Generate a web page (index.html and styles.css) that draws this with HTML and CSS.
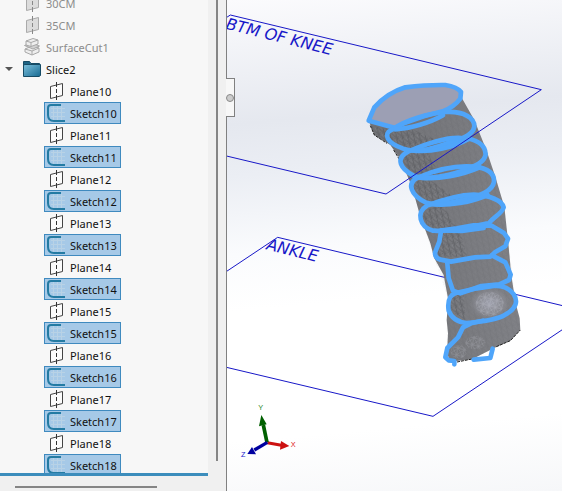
FILE: index.html
```html
<!DOCTYPE html>
<html lang="en">
<head>
    <meta charset="UTF-8">
    <meta name="viewport" content="width=device-width, initial-scale=1.0">
    <title>Slice2</title>
    <link rel="stylesheet" href="styles.css">
</head>
<body>
<svg class="defs" width="0" height="0" aria-hidden="true">
    <linearGradient id="folder-fill" x1="0" y1="0" x2="1" y2="1">
        <stop offset="0" stop-color="#7cc0dc"/>
        <stop offset="1" stop-color="#176a92"/>
    </linearGradient>
    <symbol id="plane" viewBox="0 0 18 20">
        <path d="M3.500 5.500L15.500 2.500V14.500L3.500 17.500Z" fill="#fcfcfc" stroke="#444"/>
        <path d="M9.500 1V6M9.500 8V12M9.500 14V19" stroke="#333" fill="none"/>
    </symbol>
    <symbol id="plane-off" viewBox="0 0 18 20">
        <path d="M3.500 5.500L15.500 2.500V14.500L3.500 17.500Z" fill="#dcdcdc" stroke="#aaa"/>
        <path d="M9.500 1V6M9.500 8V12M9.500 14V19" stroke="#888" fill="none"/>
    </symbol>
    <symbol id="cut" viewBox="0 0 18 20">
        <g fill="#eee" stroke="#a8a8a8" stroke-linejoin="round">
            <path d="M2 12L9 9L16 11V15L9 18L2 15Z"/>
            <path d="M2 12L9 14L16 11M9 14V18" fill="none"/>
            <path d="M1.500 8.500L9 6L16.500 9L10 12Z" fill="#d2d2d2"/>
            <path d="M3 4L10 1.500L15 3V7L8 9.500L3 8Z"/>
            <path d="M3 4L8 5.500L15 3M8 5.500V9.500" fill="none"/>
        </g>
    </symbol>
    <symbol id="folder" viewBox="0 0 18 20">
        <path d="M.500 2.500H6.500L8 4.500H16.500V7H.500Z" fill="#1d6485" stroke="#164b65"/>
        <path d="M.500 6L2 5.500H17.500V16.500L16 17.500H.500Z" fill="url(#folder-fill)" stroke="#164b65"/>
    </symbol>
    <symbol id="sketch" viewBox="0 0 18 20">
        <path d="M4 5.500H18M4 9.500H18M4 13.500H18M6.500 3V17M10.500 3V17M14.500 3V17" stroke="#b8d2e6" fill="none"/>
        <path d="M14 2H4Q1 2 1 5V12Q1 18 7 18H18" fill="none" stroke="#247ba3" stroke-width="2"/>
    </symbol>
</svg>

<div class="app">
    <aside class="panel">
        <div class="tree-area">
            <ul class="tree">
                <li><button class="item off"><svg class="icon"><use href="#plane-off"/></svg>30CM</button></li>
                <li><button class="item off"><svg class="icon"><use href="#plane-off"/></svg>35CM</button></li>
                <li><button class="item off"><svg class="icon"><use href="#cut"/></svg>SurfaceCut1</button></li>
                <li class="open">
                    <button class="caret" aria-label="Collapse Slice2"></button>
                    <button class="item"><svg class="icon"><use href="#folder"/></svg>Slice2</button>
                </li>
            </ul>
            <ul class="tree children">
                <li><button class="item"><svg class="icon"><use href="#plane"/></svg>Plane10</button></li>
                <li><button class="item selected"><svg class="icon"><use href="#sketch"/></svg>Sketch10</button></li>
                <li><button class="item"><svg class="icon"><use href="#plane"/></svg>Plane11</button></li>
                <li><button class="item selected"><svg class="icon"><use href="#sketch"/></svg>Sketch11</button></li>
                <li><button class="item"><svg class="icon"><use href="#plane"/></svg>Plane12</button></li>
                <li><button class="item selected"><svg class="icon"><use href="#sketch"/></svg>Sketch12</button></li>
                <li><button class="item"><svg class="icon"><use href="#plane"/></svg>Plane13</button></li>
                <li><button class="item selected"><svg class="icon"><use href="#sketch"/></svg>Sketch13</button></li>
                <li><button class="item"><svg class="icon"><use href="#plane"/></svg>Plane14</button></li>
                <li><button class="item selected"><svg class="icon"><use href="#sketch"/></svg>Sketch14</button></li>
                <li><button class="item"><svg class="icon"><use href="#plane"/></svg>Plane15</button></li>
                <li><button class="item selected"><svg class="icon"><use href="#sketch"/></svg>Sketch15</button></li>
                <li><button class="item"><svg class="icon"><use href="#plane"/></svg>Plane16</button></li>
                <li><button class="item selected"><svg class="icon"><use href="#sketch"/></svg>Sketch16</button></li>
                <li><button class="item"><svg class="icon"><use href="#plane"/></svg>Plane17</button></li>
                <li><button class="item selected"><svg class="icon"><use href="#sketch"/></svg>Sketch17</button></li>
                <li><button class="item"><svg class="icon"><use href="#plane"/></svg>Plane18</button></li>
                <li><button class="item selected"><svg class="icon"><use href="#sketch"/></svg>Sketch18</button></li>
            </ul>
        </div>
        <div class="scroll-y"><div class="thumb"></div></div>
        <div class="scroll-x"><div class="thumb"></div></div>
    </aside>

    <main class="viewport">
        <svg class="scene" viewBox="0 0 1005 1473" preserveAspectRatio="xMinYMin slice">
            <defs>
                <linearGradient id="leg-fill" x1="0" y1="0" x2="1" y2="0">
                    <stop offset="0" stop-color="#707175"/>
                    <stop offset="1" stop-color="#808186"/>
                </linearGradient>
                <radialGradient id="shine">
                    <stop offset="0" stop-color="#a0a2ae"/>
                    <stop offset="1" stop-color="#a0a2ae" stop-opacity="0"/>
                </radialGradient>
                <pattern id="mesh" width="17" height="23" patternUnits="userSpaceOnUse" patternTransform="rotate(-12)">
                    <path d="M0 0L17 23M9 0L2 23M17 4L0 12M4 0V23" stroke="#4b4c50" stroke-width="2" fill="none"/>
                    <path d="M0 18L13 5L17 14" stroke="#a0a1a5" stroke-width="1" fill="none"/>
                </pattern>
                <pattern id="mesh-light" width="19" height="21" patternUnits="userSpaceOnUse" patternTransform="rotate(15)">
                    <path d="M0 0L19 21M19 0L0 21M9 0V21M0 10H19" stroke="#c6c8d2" stroke-width="2" fill="none"/>
                </pattern>
            </defs>

            <!-- ankle plane -->
            <g class="plane-line">
                <path d="M-10 820L152 712L1015 919"/>
                <path d="M-10 1100L618 1249L1015 983"/>
            </g>

            <!-- leg -->
            <path fill="url(#leg-fill)" d="M428 370L442 405L490 435L520 478L555 560L580 650L610 730L622 775L650 825L664 900L659 960L663 1000L660 1060L670 1085L735 1078L800 1045L850 1022L880 990L878 955L866 910L852 820L845 740L832 620L805 530L778 450L742 360L705 295L560 270Z"/>
            <path fill="url(#mesh)" opacity=".12" d="M430 375L442 405L490 435L520 478L555 560L580 650L622 775L664 900L659 960L660 1060L670 1085L735 1078L850 1022L880 990L866 910L832 620L742 360L690 330L500 390Z"/>
            <g fill="url(#mesh)" opacity=".45">
                <path d="M432 378L500 390L560 390L640 425L600 445L530 450L442 405Z"/>
                <path d="M525 480Q550 450 600 455L640 525L560 530Z"/>
                <path d="M556 565Q560 535 610 540L680 590L610 612Z"/>
                <path d="M588 650Q600 615 650 620L690 685L610 690Z"/>
                <path d="M640 700L700 695L720 770L630 770Z"/>
                <path d="M670 885L710 880L715 960L670 930Z"/>
            </g>
            <ellipse cx="788" cy="910" rx="60" ry="48" fill="url(#shine)"/>
            <ellipse cx="788" cy="912" rx="42" ry="36" fill="url(#mesh-light)" opacity=".4"/>
            <ellipse cx="745" cy="1028" rx="30" ry="20" fill="url(#mesh-light)" opacity=".3"/>
            <ellipse cx="695" cy="1055" rx="24" ry="20" fill="url(#mesh-light)" opacity=".3"/>
            <path d="M430 377L442 405L480 430M500 450L517 478M690 1086L735 1077M808 1040L850 1022L880 990" fill="none" stroke="#222" stroke-width="3" stroke-dasharray="9 3"/>

            <!-- slice contours -->
            <g class="contours">
                <path class="cap" d="M425 362L442 322Q482 278 535 262Q600 254 655 255Q690 260 702 276L700 296Q682 320 650 333L590 349L530 370L505 384Z"/>
                <path d="M495 389C535 360 610 338 660 336C710 334 744 354 742 380C738 408 695 420 660 430C610 449 565 459 528 446C480 429 466 402 495 389Z"/>
                <path d="M505 388C550 386 610 368 648 346"/>
                <path d="M543 455C610 426 660 411 703 414C750 416 775 435 776 463C772 490 737 500 705 513C650 532 585 540 558 526C523 507 502 477 543 455Z"/>
                <path d="M555 451C610 459 680 441 722 418"/>
                <path d="M574 532C630 508 690 496 740 500C785 505 803 523 801 546C796 574 755 590 705 600C665 611 623 618 596 607C553 588 536 549 574 532Z"/>
                <path d="M575 532C630 542 710 523 758 502"/>
                <path d="M600 617C640 602 700 585 740 584C790 586 825 602 830 622C824 642 802 648 785 670C745 675 685 696 618 692C577 681 567 637 600 617Z"/>
                <path d="M610 612C665 620 735 605 782 585"/>
                <path d="M641 700L637 725L624 758Q624 774 640 779L672 785L744 772L790 770L805 756L835 739L843 716L831 699L794 677L740 676L690 685L641 692"/>
                <path d="M645 691L705 693L770 684"/>
                <path d="M661 790L665 835L678 872L700 880L763 858L817 853L846 840L851 824L835 787L795 766"/>
                <path d="M690 878C665 885 661 905 665 932C674 956 695 967 719 969C760 965 813 960 836 943C870 925 872 902 861 884C845 862 825 856 800 858L750 865Z"/>
                <path d="M768 962L732 970L708 982L693 1012L661 1044L655 1072L665 1081L682 1083V1093"/>
                <path d="M740 1079L790 1074L797 1046"/>
            </g>

            <!-- knee plane -->
            <g class="plane-line">
                <path d="M-10 58L10 45L943 269L477 582L-10 466"/>
            </g>
            <g class="plane-label">
                <text transform="translate(-6 86) rotate(14)">BTM OF KNEE</text>
                <text transform="translate(116 748) rotate(14)">ANKLE</text>
            </g>

            <!-- axis triad -->
            <g class="triad">
                <g fill="#cc1111" stroke="#cc1111">
                    <path d="M121 1328L163 1336" stroke-width="9"/>
                    <path d="M162 1323L187 1338L159 1349Z" stroke="none"/>
                </g>
                <g fill="#006000" stroke="#006000">
                    <path d="M120 1327L109 1275" stroke-width="11"/>
                    <path d="M103 1245L119 1273L96 1279Z" stroke="none"/>
                </g>
                <g fill="#0000a0" stroke="#0000a0">
                    <path d="M121 1327L82 1350" stroke-width="10"/>
                    <path d="M61 1362L75 1341L87 1363Z" stroke="none"/>
                </g>
                <text x="191" y="1342" fill="#e02020">X</text>
                <text x="94" y="1230" fill="#2c8a2c">Y</text>
                <text x="42" y="1372" fill="#2222cc">Z</text>
            </g>
        </svg>
        <button class="splitter" aria-label="Toggle panel"></button>
    </main>
</div>
</body>
</html>
```
FILE: styles.css
```css
* {
    box-sizing: border-box;
}
body {
    margin: 0;
    font-family: "Noto Sans", "Open Sans", sans-serif;
    font-size: 11px;
    color: #111;
}
button {
    font: inherit;
    color: inherit;
    border: 0;
    padding: 0;
    background: none;
    cursor: pointer;
}
.defs {
    position: absolute;
}
.app {
    display: flex;
    height: 100vh;
    overflow: hidden;
}
.panel {
    display: grid;
    grid-template-columns: 208px 18px;
    grid-template-rows: 1fr 13px;
    background-color: #f0f0f0;
    border-right: 1px solid #808080;
}
.tree-area {
    min-height: 0;
    overflow: hidden;
    background-color: #f7f7f7;
    border-bottom: 3px solid #3c8dbc;
    margin-bottom: 2px;
}
.tree {
    list-style: none;
    margin: -8px 0 0;
    padding: 0 0 0 20px;
}
.tree li {
    display: flex;
    height: 22px;
}
.tree .open {
    margin-left: -20px;
}
.children {
    margin-top: 0;
    padding-left: 44px;
}
.caret {
    width: 20px;
    display: flex;
    align-items: center;
    padding-left: 5px;
}
.caret::before {
    content: "";
    border: 4px solid transparent;
    border-top-color: #555;
    border-bottom: 0;
}
.item {
    display: flex;
    align-items: center;
    gap: 5px;
    padding: 0 3px 0 2px;
    border: 1px solid transparent;
    white-space: nowrap;
}
.item.off {
    color: #8c8c8c;
}
.item.selected {
    background-color: #a6c9e7;
    border-color: #3f8abf;
}
.icon {
    width: 18px;
    height: 20px;
}
.scroll-y {
    display: flex;
    justify-content: center;
    padding-bottom: 17px;
}
.scroll-y .thumb {
    width: 2px;
    background-color: #858585;
}
.scroll-x {
    grid-column: 1 / 3;
    padding: 8px 69px 0 15px;
}
.scroll-x .thumb {
    height: 2px;
    background-color: #858585;
}
.viewport {
    position: relative;
    flex: 1;
    min-width: 0;
    background: linear-gradient(175deg, #fbfbfd 0%, #e5e8ef 24%, #ebeef4 34%, #fafbfd 49%, #fff 60%, #fff 85%, #f6f7f9 100%);
}
.scene {
    display: block;
    width: 100%;
    height: 100%;
}
.plane-line {
    fill: none;
    stroke: #1818c8;
    stroke-width: 3;
}
.plane-label {
    fill: #1818c8;
    font-family: "DejaVu Sans", sans-serif;
    font-size: 48px;
    font-style: italic;
}
.contours {
    fill: none;
    stroke: #4fa5fa;
    stroke-width: 14;
    stroke-linejoin: round;
    stroke-linecap: round;
}
.contours .cap {
    fill: #9c9fb4;
}
.triad text {
    font-family: "Liberation Sans", sans-serif;
    font-size: 22px;
}
/* handle that sits over the left edge of the view */
.splitter {
    position: absolute;
    left: -1px;
    top: 78px;
    width: 9px;
    height: 39px;
    display: flex;
    align-items: center;
    justify-content: center;
    background-color: #f7f7f7;
    border: 1px solid #808080;
    border-left: 0;
}
.splitter::before {
    content: "";
    width: 6px;
    height: 6px;
    border: 1px solid #8a8a8a;
    border-radius: 50%;
    background-color: #ccc;
}
```
